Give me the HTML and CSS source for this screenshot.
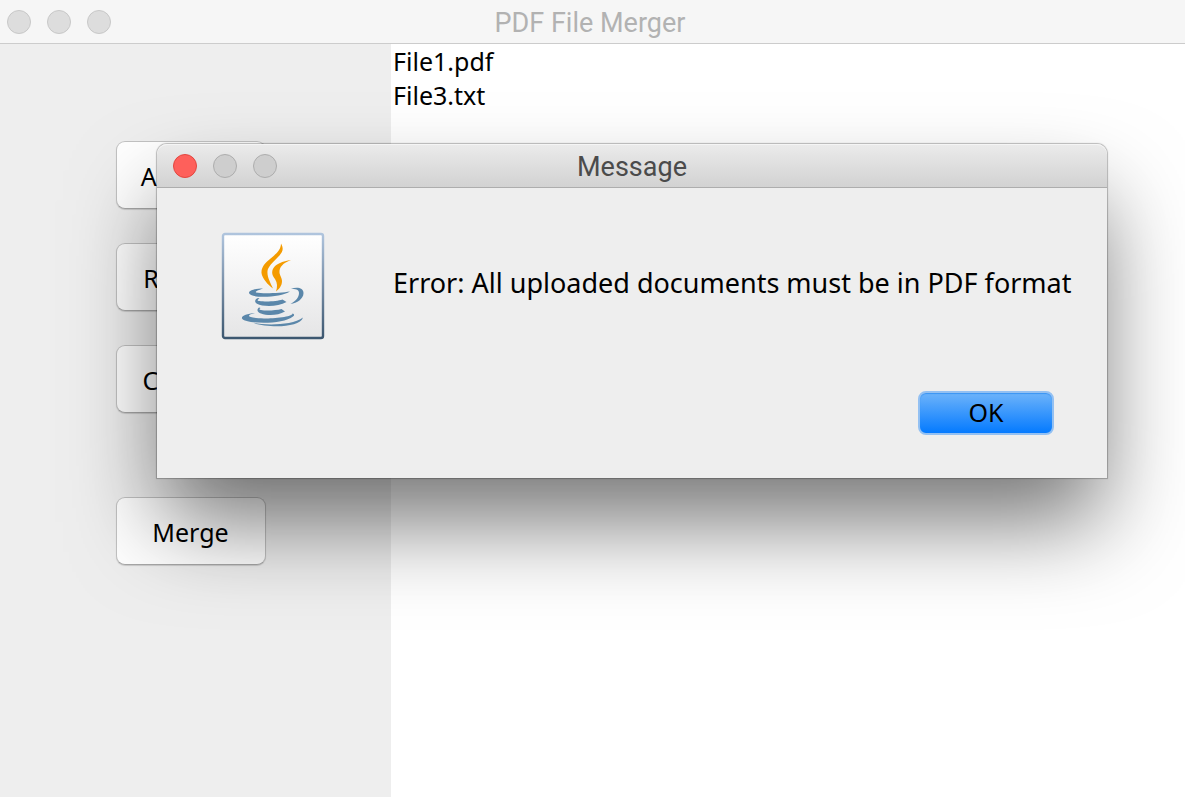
FILE: index.html
```html
<!DOCTYPE html>
<html lang="en">
<head>
<meta charset="utf-8">
<title>PDF File Merger</title>
<link rel="stylesheet" href="styles.css">
</head>
<body>
<div class="window">
  <header class="titlebar">
    <div class="lights"><span class="light"></span><span class="light"></span><span class="light"></span></div>
    <h1 class="title">PDF File Merger</h1>
  </header>
  <main class="content">
    <nav class="sidebar">
      <button class="action" type="button">Add PDF</button>
      <button class="action" type="button">Remove</button>
      <button class="action" type="button">Clear All</button>
      <button class="action action-merge" type="button">Merge</button>
    </nav>
    <ul class="files">
      <li>File1.pdf</li>
      <li>File3.txt</li>
    </ul>
  </main>
</div>
<section class="dialog" role="dialog" aria-labelledby="dialog-title">
  <header class="titlebar titlebar-active">
    <div class="lights"><span class="light light-close"></span><span class="light"></span><span class="light"></span></div>
    <h2 class="title" id="dialog-title">Message</h2>
  </header>
  <div class="message">
    <svg class="java" viewBox="0 0 104 108" aria-hidden="true">
      <defs>
        <linearGradient id="edge" x1="0" y1="0" x2="0" y2="1"><stop offset="0" stop-color="#afc4dd"/><stop offset=".55" stop-color="#7188a1"/><stop offset="1" stop-color="#3c5770"/></linearGradient>
        <linearGradient id="face" x1="0" y1="0" x2="0" y2="1"><stop offset="0" stop-color="#ffffff"/><stop offset="1" stop-color="#e5e5e6"/></linearGradient>
      </defs>
      <rect x="2" y="2" width="100" height="104" rx="2" fill="url(#face)" stroke="url(#edge)" stroke-width="2.4"/>
      <g fill="#f49b00">
        <path d="M60 11.500C63 17 62 20 57 25C51 31 47 35 46.500 39C46 45 49 50 52 56.500C47 53 41 46 40.500 41C40 35 45 30 49 27C55 22 60 18 60 11.500Z"/>
        <path d="M70 28C62 31 58 35 58.500 41C59 44 61 46 61 49C61 54 58 57 55 59.500C56.500 55 56.500 51 54 47C52 44 50.500 42 51.500 38C53.500 32 62 29 70 28Z"/>
      </g>
      <g fill="#5b87aa">
        <path d="M42 56.500C36 56.500 28 58 28 61C29 66.500 59 66 69 59.500C60 61 42 62 35 60.500C34 59 38 58 42 56.500Z"/>
        <path d="M70 57C76 54.500 82.500 56 82.500 61C82.500 67 76 71 69.500 72C75 69 78 65 78 61C78 57 74 57 70 57Z"/>
        <path d="M37 66C34 67 33 70 36 71.800C42 75 57 75 65.500 70L61.500 67.500C56 69.500 44 70 38.500 69C36 69 36 68 38.500 66.500Z"/>
        <path d="M38 75.500C35.500 77.500 36 80 40 81.500C47 84 57 83.500 64 79.500L60.500 77C55 78.500 45 79 40 78C38 78 38 77 39.500 76Z"/>
        <path d="M34 81C26 81.500 20 84 21 86.500C24 92 62 93 72 84.500C74 83 73 82 71.500 81.500C71 85 54 86.500 43 86.500C33 86.500 27 85 28 83.500C29 82 32 82 34 81Z"/>
        <path d="M32.500 91C43 93 71 94 82 85.500C79 96 47 96 32.500 91Z"/>
      </g>
    </svg>
    <p class="message-text">Error: All uploaded documents must be in PDF format</p>
  </div>
  <footer class="buttons"><button class="ok" type="button">OK</button></footer>
</section>
</body>
</html>
```
FILE: styles.css
```css
* { box-sizing: border-box; }
body {
  margin: 0;
  min-height: 100vh;
  position: relative;
  overflow: hidden;
  font-family: "Noto Sans", "Open Sans", sans-serif;
  font-size: 25px;
  color: #000;
}
.window {
  display: flex;
  flex-direction: column;
  min-height: 100vh;
}
.titlebar {
  display: grid;
  grid-template-columns: 1fr auto 1fr;
  align-items: center;
  height: 44px;
  padding: 0 12px 0 7px;
  background: #f6f6f6;
  border-bottom: 1px solid #cccccc;
}
.title {
  margin: 0;
  padding-top: 2px;
  font: 400 27px/30px Roboto, "Liberation Sans", sans-serif;
  color: #b2b2b2;
}
.lights { display: flex; gap: 16px; }
.light {
  width: 24px;
  height: 24px;
  border: 1px solid #c8c8c8;
  border-radius: 50%;
  background: #dddddd;
}
.content {
  flex: 1;
  display: grid;
  grid-template-columns: 33% 1fr;
}
.sidebar {
  display: flex;
  flex-direction: column;
  align-items: center;
  gap: 34px;
  padding: 97px 10px 0 0;
  background: #eeeeee;
}
.action {
  width: 150px;
  height: 68px;
  padding: 2px 0 0;
  border: 1px solid #c2c2c2;
  border-bottom-color: #a8a8a8;
  border-radius: 9px;
  background: #fff;
  box-shadow: 0 1px 1px rgba(0, 0, 0, .15);
  font: inherit;
  color: inherit;
}
.action-merge { margin-top: 50px; }
.files {
  margin: 0;
  padding: 0 2px;
  list-style: none;
  line-height: 34px;
  background: #fff;
}
.dialog {
  position: absolute;
  top: 144px;
  left: 157px;
  right: 78px;
  border-radius: 10px 10px 0 0;
  background: #eeeeee;
  box-shadow: 0 0 1px 1px rgba(0, 0, 0, .25), 0 50px 90px -6px rgba(0, 0, 0, .54);
}
.titlebar-active {
  padding: 0 16px;
  border-bottom-color: #adadad;
  border-radius: 10px 10px 0 0;
  background: linear-gradient(#ebebeb, #d2d2d2);
  box-shadow: inset 0 1px #f5f5f5;
}
.titlebar-active .title { color: #4b4b4b; }
.titlebar-active .light { border-color: #adadad; background: #cecece; }
.titlebar-active .light-close { border-color: #e2463f; background: #fe605b; }
.message {
  display: flex;
  align-items: center;
  gap: 68px;
  padding: 44px 32px 0 64px;
}
.java { width: 104px; height: 108px; flex: none; }
.message-text { margin: 0; padding-bottom: 8px; font-size: 27px; white-space: nowrap; }
.buttons {
  display: flex;
  justify-content: flex-end;
  padding: 51px 53px 43px;
}
.ok {
  width: 136px;
  height: 44px;
  padding: 0 0 2px;
  border: 2px solid #93c0f2;
  border-radius: 8px;
  background: linear-gradient(#6db3fa, #047aff);
  box-shadow: inset 0 1px 1px #3a94f2;
  font: inherit;
  color: inherit;
}
```
